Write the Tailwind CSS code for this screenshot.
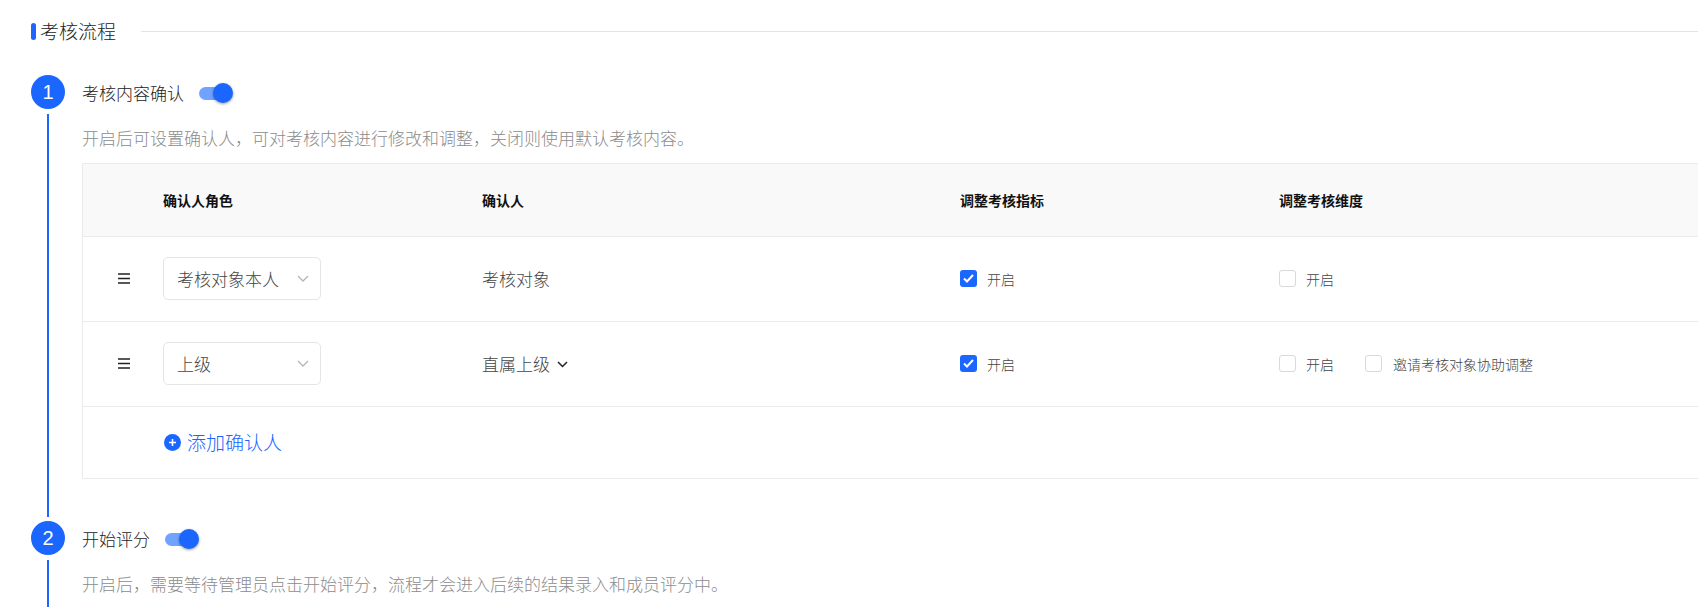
<!DOCTYPE html>
<html lang="zh-CN">
<head>
  <meta charset="UTF-8">
  <meta name="viewport" content="width=device-width, initial-scale=1.0">
  <title>考核流程</title>
  <script src="https://cdn.jsdelivr.net/npm/@tailwindcss/browser@4"></script>
</head>
<body class="bg-white h-[607px] overflow-hidden font-['Noto_Sans_CJK_SC','Liberation_Sans',sans-serif] font-light text-[#222]">
  <div class="pl-[31px] pt-[20px]">

    <!-- Section title -->
    <div class="flex items-center h-[22px]">
      <span class="w-[5px] h-[17px] rounded-full bg-[#1a66ff]"></span>
      <span class="ml-[4px] text-[19px] leading-[22px] text-[#222]">考核流程</span>
      <span class="ml-[25px] flex-1 h-px bg-[#e4e4e4]"></span>
    </div>

    <!-- Step 1 -->
    <div class="flex mt-[33px]">
      <div class="w-[34px] flex flex-col items-center shrink-0">
        <div class="w-[34px] h-[34px] rounded-full bg-[#1a66ff] text-white flex items-center justify-center text-[20px] font-['Liberation_Sans']">1</div>
        <div class="w-[2px] flex-1 mt-[5px] mb-[4px] bg-[#1a66ff]"></div>
      </div>
      <div class="ml-[17px] pb-[42px]">
        <div class="flex items-center h-[36px]">
          <span class="text-[17px] text-[#222]">考核内容确认</span>
          <span class="relative ml-[15px] w-[34px] h-[20px] flex items-center">
            <span class="w-[30px] h-[13px] rounded-full bg-[#70a3ff]"></span>
            <span class="absolute right-0 top-0 w-[20px] h-[20px] rounded-full bg-[#1a66ff] shadow-[0_1px_3px_rgba(0,0,0,0.4)]"></span>
          </span>
        </div>
        <p class="mt-[15px] text-[17px] leading-[24px] text-[#8c8c8c] whitespace-nowrap">开启后可设置确认人，可对考核内容进行修改和调整，关闭则使用默认考核内容。</p>

        <!-- Confirmer table -->
        <div class="mt-[13px] w-[1700px] border border-[#ebebeb] text-[17px] text-[#444]">
          <div class="flex items-center h-[73px] bg-[#f9f9f9] border-b border-[#ebebeb] text-[14px] font-bold text-[#111]">
            <div class="w-[80px]"></div>
            <div class="w-[319px]">确认人角色</div>
            <div class="w-[478px]">确认人</div>
            <div class="w-[319px]">调整考核指标</div>
            <div>调整考核维度</div>
          </div>

          <div class="flex items-center h-[85px] border-b border-[#ebebeb]">
            <div class="w-[80px] pl-[35px] mb-[1px]">
              <svg width="12" height="11" viewBox="0 0 12 11"><path d="M0 1h12M0 5.5h12M0 10h12" stroke="#222" stroke-width="1.5"/></svg>
            </div>
            <div class="w-[319px] mb-[1px]">
              <div class="w-[158px] h-[43px] border border-[#e5e5e5] rounded-[5px] flex items-center justify-between pl-[13px] pr-[11px]">
                <span>考核对象本人</span>
                <svg width="12" height="7" viewBox="0 0 12 7" fill="none"><path d="M1 1l5 5 5-5" stroke="#b4b4bc" stroke-width="1.3"/></svg>
              </div>
            </div>
            <div class="w-[478px]">考核对象</div>
            <div class="w-[319px] flex items-center text-[14px]">
              <span class="w-[17px] h-[17px] mb-[1px] rounded-[3px] bg-[#1a66ff] flex items-center justify-center">
                <svg width="11" height="9" viewBox="0 0 11 9" fill="none"><path d="M1 4.5l3 3 6-6.5" stroke="#fff" stroke-width="2"/></svg>
              </span>
              <span class="ml-[10px]">开启</span>
            </div>
            <div class="flex items-center text-[14px]">
              <span class="w-[17px] h-[17px] mb-[1px] rounded-[3px] border border-[#d9d9d9] bg-white"></span>
              <span class="ml-[10px]">开启</span>
            </div>
          </div>

          <div class="flex items-center h-[85px] border-b border-[#ebebeb]">
            <div class="w-[80px] pl-[35px] mb-[1px]">
              <svg width="12" height="11" viewBox="0 0 12 11"><path d="M0 1h12M0 5.5h12M0 10h12" stroke="#222" stroke-width="1.5"/></svg>
            </div>
            <div class="w-[319px] mb-[1px]">
              <div class="w-[158px] h-[43px] border border-[#e5e5e5] rounded-[5px] flex items-center justify-between pl-[13px] pr-[11px]">
                <span>上级</span>
                <svg width="12" height="7" viewBox="0 0 12 7" fill="none"><path d="M1 1l5 5 5-5" stroke="#b4b4bc" stroke-width="1.3"/></svg>
              </div>
            </div>
            <div class="w-[478px] flex items-center">
              <span>直属上级</span>
              <svg class="ml-[7px]" width="11" height="7" viewBox="0 0 11 7" fill="none"><path d="M1 1l4.5 4.5L10 1" stroke="#222" stroke-width="1.5"/></svg>
            </div>
            <div class="w-[319px] flex items-center text-[14px]">
              <span class="w-[17px] h-[17px] mb-[1px] rounded-[3px] bg-[#1a66ff] flex items-center justify-center">
                <svg width="11" height="9" viewBox="0 0 11 9" fill="none"><path d="M1 4.5l3 3 6-6.5" stroke="#fff" stroke-width="2"/></svg>
              </span>
              <span class="ml-[10px]">开启</span>
            </div>
            <div class="flex items-center text-[14px]">
              <span class="w-[17px] h-[17px] mb-[1px] rounded-[3px] border border-[#d9d9d9] bg-white"></span>
              <span class="ml-[10px]">开启</span>
              <span class="ml-[31px] w-[17px] h-[17px] mb-[1px] rounded-[3px] border border-[#d9d9d9] bg-white"></span>
              <span class="ml-[11px]">邀请考核对象协助调整</span>
            </div>
          </div>

          <div class="flex items-center h-[71px] pl-[80px] text-[#1a66ff] text-[19px]">
            <svg class="ml-[1px]" width="17" height="17" viewBox="0 0 17 17"><circle cx="8.5" cy="8.5" r="8.5" fill="#1a66ff"/><path d="M8.5 5v7M5 8.5h7" stroke="#fff" stroke-width="1.6"/></svg>
            <span class="ml-[6px]">添加确认人</span>
          </div>
        </div>
      </div>
    </div>

    <!-- Step 2 -->
    <div class="flex">
      <div class="w-[34px] flex flex-col items-center shrink-0">
        <div class="w-[34px] h-[34px] rounded-full bg-[#1a66ff] text-white flex items-center justify-center text-[20px] font-['Liberation_Sans']">2</div>
        <div class="w-[2px] h-[60px] mt-[5px] bg-[#1a66ff]"></div>
      </div>
      <div class="ml-[17px]">
        <div class="flex items-center h-[36px]">
          <span class="text-[17px] text-[#222]">开始评分</span>
          <span class="relative ml-[15px] w-[34px] h-[20px] flex items-center">
            <span class="w-[30px] h-[13px] rounded-full bg-[#70a3ff]"></span>
            <span class="absolute right-0 top-0 w-[20px] h-[20px] rounded-full bg-[#1a66ff] shadow-[0_1px_3px_rgba(0,0,0,0.4)]"></span>
          </span>
        </div>
        <p class="mt-[15px] text-[17px] leading-[24px] text-[#8c8c8c] whitespace-nowrap">开启后，需要等待管理员点击开始评分，流程才会进入后续的结果录入和成员评分中。</p>
      </div>
    </div>

  </div>
</body>
</html>
